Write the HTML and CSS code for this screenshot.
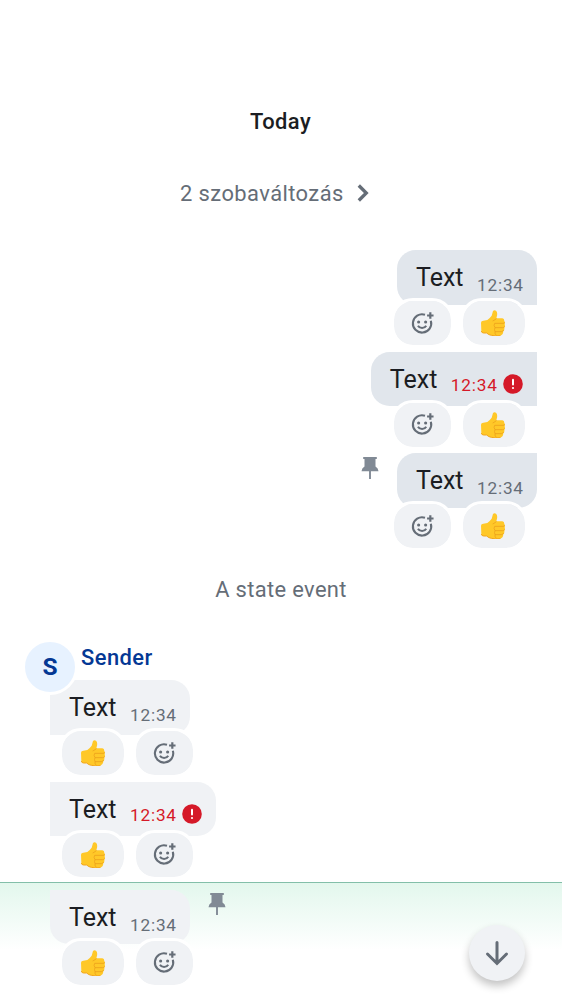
FILE: index.html
```html
<!DOCTYPE html>
<html lang="hu">
<head>
<meta charset="utf-8">
<title>Timeline</title>
<link rel="stylesheet" href="styles.css">
</head>
<body>
<svg class="defs" width="0" height="0" aria-hidden="true">
  <symbol id="add" viewBox="0 0 24 24">
    <path d="M14.4 3.600A8.800 8.800 0 1 0 20 9.400" fill="none" stroke="currentColor" stroke-width="2"/>
    <path d="M19.500 1.200v6.200M16.400 4.300h6.200" fill="none" stroke="currentColor" stroke-width="2.100"/>
    <circle cx="8.300" cy="10.500" r="1.500" fill="currentColor"/>
    <circle cx="15" cy="10.500" r="1.500" fill="currentColor"/>
    <path d="M7.600 14.200c.9 1.500 2.300 2.200 4 2.200s3.100-.7 4-2.200" fill="none" stroke="currentColor" stroke-width="1.900"/>
  </symbol>
  <symbol id="thumb" viewBox="0 0 72 78">
    <path d="M0 38Q0 32 7 32L19 30Q26 25 32 17L36 3Q40-1 45 2Q50 6 48 17L46 25H64Q70 26 70 33Q73 38 71 43Q73 48 70 54Q71 60 67 64Q66 75 58 77Q43 79 30 76Q22 75 17 69L6 69Q1 68 1 63Z" fill="#ffc828"/>
    <path d="M46 25Q42 31 35 33M41 40H66Q70 40 71 37M42 53H65Q69 53 71 49M42 65H61Q65 65 68 60M41 40Q37 46 42 53Q39 58 42 65Q41 72 46 76" fill="none" stroke="#eba01c" stroke-width="2.400"/>
    <path d="M1 63Q2 69 8 69L17 69Q23 75 31 76Q43 79 58 77" fill="none" stroke="#f2a61d" stroke-width="3"/>
  </symbol>
  <symbol id="pin" viewBox="0 0 18 22">
    <path d="M2.200 0H15.800V2H14.500V9.500Q17.300 11 17.500 14.200H.5Q.7 11 3.500 9.500V2H2.200Z" fill="currentColor"/>
    <path d="M9 14V22" stroke="currentColor" stroke-width="1.900"/>
  </symbol>
  <symbol id="error" viewBox="0 0 20 20">
    <circle cx="10" cy="10" r="9.800" fill="currentColor"/>
    <path d="M10 5.800V10.400" stroke="#fff" stroke-width="2" stroke-linecap="round"/>
    <circle cx="10" cy="14" r="1.100" fill="#fff"/>
  </symbol>
</svg>
<main class="timeline">
  <div class="day">Today</div>
  <div class="changes">2 szobaváltozás
    <svg class="chevron" viewBox="0 0 12 18"><path d="M1.800 1.500L9.300 9L1.800 16.500" fill="none" stroke="currentColor" stroke-width="3.300"/></svg>
  </div>

  <section class="group mine">
    <article class="message">
      <div class="bubble first"><span class="text">Text</span><span class="time">12:34</span></div>
      <div class="reactions"><span class="pill add"><svg><use href="#add"/></svg></span><span class="pill like"><svg><use href="#thumb"/></svg></span></div>
    </article>
    <article class="message">
      <div class="bubble middle"><span class="text">Text</span><span class="time failed">12:34</span><svg class="error"><use href="#error"/></svg></div>
      <div class="reactions"><span class="pill add"><svg><use href="#add"/></svg></span><span class="pill like"><svg><use href="#thumb"/></svg></span></div>
    </article>
    <article class="message">
      <div class="line"><svg class="pin"><use href="#pin"/></svg><div class="bubble last"><span class="text">Text</span><span class="time">12:34</span></div></div>
      <div class="reactions"><span class="pill add"><svg><use href="#add"/></svg></span><span class="pill like"><svg><use href="#thumb"/></svg></span></div>
    </article>
  </section>

  <div class="state">A state event</div>

  <section class="group theirs">
    <header class="sender"><span class="avatar">S</span><span class="name">Sender</span></header>
    <article class="message">
      <div class="bubble first"><span class="text">Text</span><span class="time">12:34</span></div>
      <div class="reactions"><span class="pill like"><svg><use href="#thumb"/></svg></span><span class="pill add"><svg><use href="#add"/></svg></span></div>
    </article>
    <article class="message">
      <div class="bubble middle"><span class="text">Text</span><span class="time failed">12:34</span><svg class="error"><use href="#error"/></svg></div>
      <div class="reactions"><span class="pill like"><svg><use href="#thumb"/></svg></span><span class="pill add"><svg><use href="#add"/></svg></span></div>
    </article>
  </section>
  <section class="group theirs focused">
    <article class="message">
      <div class="line"><div class="bubble last"><span class="text">Text</span><span class="time">12:34</span></div><svg class="pin"><use href="#pin"/></svg></div>
      <div class="reactions"><span class="pill like"><svg><use href="#thumb"/></svg></span><span class="pill add"><svg><use href="#add"/></svg></span></div>
    </article>
  </section>
</main>
<button class="jump" aria-label="Jump to bottom"><svg viewBox="0 0 24 26"><path d="M12 2.500V23M2.500 14L12 23.500L21.500 14" fill="none" stroke="currentColor" stroke-width="3" stroke-linecap="round"/></svg></button>
</body>
</html>
```
FILE: styles.css
```css
* { box-sizing: border-box; }
body {
  margin: 0;
  width: 562px;
  height: 1000px;
  overflow: hidden;
  position: relative;
  background: #fff;
  color: #1b1d22;
  font-family: Roboto, sans-serif;
}
svg { display: block; flex: none; }
.defs { position: absolute; }
.timeline { display: flex; flex-direction: column; padding-top: 106px; }
.day {
  height: 32px;
  line-height: 32px;
  padding-right: 1px;
  text-align: center;
  font-size: 21.9px;
  font-weight: 500;
  letter-spacing: 0.45px;
}
.changes {
  display: flex;
  align-items: center;
  height: 32px;
  margin: 39px 0 0 180px;
  gap: 13px;
  color: #656d77;
  font-size: 21.9px;
  letter-spacing: 0.43px;
}
.chevron { width: 12px; height: 18px; }
.group { display: flex; flex-direction: column; }
.mine { align-items: flex-end; padding-right: 25px; margin-top: 41.2px; }
.message { display: flex; flex-direction: column; height: 101.5px; }
.mine .message { align-items: flex-end; }
.theirs .message { align-items: flex-start; padding-left: 50px; }
.line { display: flex; align-items: flex-start; }
.bubble {
  display: flex;
  height: 54.6px;
  padding: 0 13px 0 19px;
  border-radius: 18.7px;
  background: #e1e6ec;
}
.theirs .bubble { background: #f0f2f5; }
.mine .first { border-bottom-right-radius: 0; }
.mine .middle { border-top-right-radius: 0; border-bottom-right-radius: 0; }
.mine .last { border-top-right-radius: 0; }
.theirs .first { border-top-left-radius: 0; border-bottom-left-radius: 0; }
.theirs .middle { border-top-left-radius: 0; border-bottom-left-radius: 0; }
.theirs .last { border-top-left-radius: 0; }
.bubble.middle { padding-right: 14px; }
.text {
  width: 61px;
  line-height: 55px;
  font-size: 25px;
  letter-spacing: 0;
  white-space: nowrap;
}
.time {
  width: 47px;
  line-height: 70px;
  font-size: 17.2px;
  letter-spacing: 0.8px;
  color: #656d77;
  white-space: nowrap;
}
.time.failed { line-height: 66px; color: #d51928; }
.error { width: 20px; height: 20px; margin: 22.700px 0 0 5.2px; color: #d51928; }
.reactions {
  display: flex;
  position: relative;
  gap: 6px;
  margin: -6.4px 9.400px 0 9px;
}
.pill {
  display: flex;
  align-items: center;
  justify-content: center;
  height: 50px;
  border: 3.100px solid #fff;
  border-radius: 22px;
  background: #f0f2f5;
  background-clip: padding-box;
}
.add { width: 62.5px; color: #656d77; }
.like { width: 68px; }
.add svg { width: 25px; height: 25px; }
.like svg { width: 24px; height: 26px; margin-right: 1px; }
.pin { width: 18px; height: 22px; margin: 3.500px 17.5px 0; color: #818a95; }
.mine .pin { margin-right: 18px; }
.state {
  height: 32px;
  line-height: 32px;
  margin-top: 19px;
  text-align: center;
  font-size: 21.9px;
  letter-spacing: 0.35px;
  color: #656d77;
}
.sender {
  display: flex;
  position: relative;
  height: 56px;
  margin: 33px 0 -14.5px 22px;
}
.avatar {
  width: 56px;
  height: 56px;
  border: 3px solid #fff;
  border-radius: 50%;
  background: #e7f2ff;
  color: #043894;
  text-align: center;
  line-height: 50px;
  font-size: 24.500px;
  font-weight: 700;
}
.name {
  margin-left: 3px;
  line-height: 37px;
  font-size: 21.9px;
  font-weight: 500;
  letter-spacing: 0.45px;
  color: #043894;
}
.focused {
  margin-top: -1px;
  padding-top: 7.5px;
  background: linear-gradient(#83bfa9 1.500px, #e3f7ed 1.500px, #fff 68px);
}
.jump {
  position: absolute;
  left: 468.5px;
  top: 925px;
  display: flex;
  align-items: center;
  justify-content: center;
  width: 56px;
  height: 56px;
  padding: 0;
  border: 0;
  border-radius: 50%;
  background: #f0f2f5;
  color: #656d77;
  box-shadow: 0 5px 9px rgba(0, 0, 0, 0.24);
}
.jump svg { width: 24px; height: 26px; }
```
